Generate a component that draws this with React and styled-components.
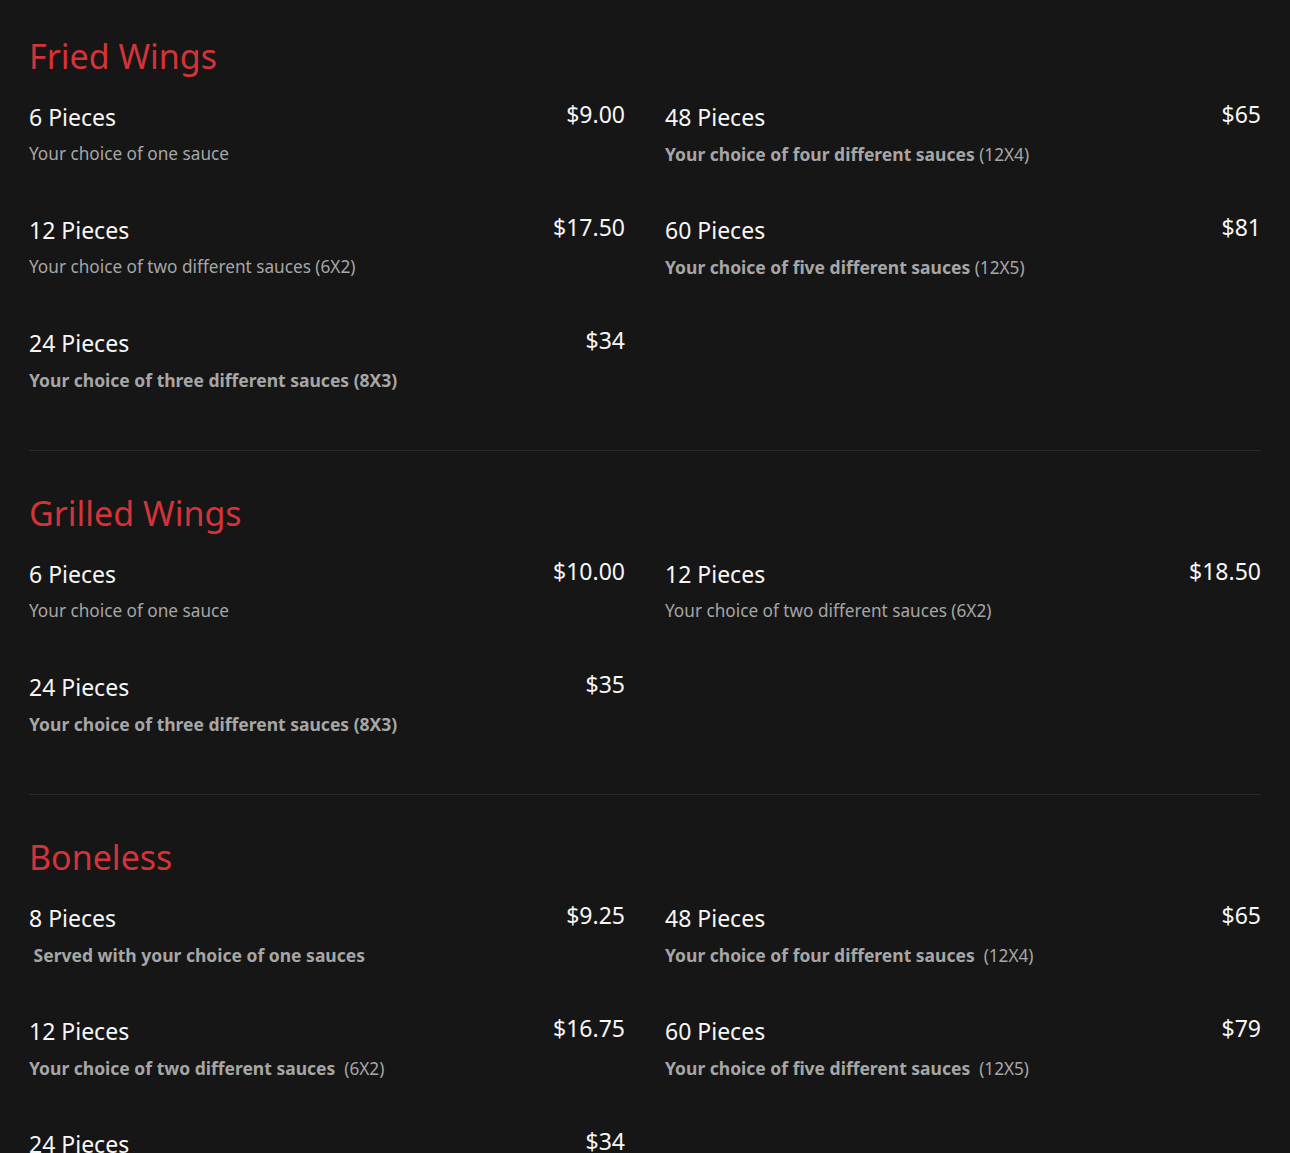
import React from "react";
import styled, { createGlobalStyle } from "styled-components";

const GlobalStyle = createGlobalStyle`
    html, body {
        margin: 0;
        padding: 0;
        background: #161616;
    }
    body {
        font-family: "Noto Sans", "Open Sans", sans-serif;
    }
`;

const menu = [
    {
        title: "Fried Wings",
        left: [
            { name: "6 Pieces", price: "$9.00", desc: [["Your choice of one sauce", false]] },
            { name: "12 Pieces", price: "$17.50", desc: [["Your choice of two different sauces (6X2)", false]] },
            { name: "24 Pieces", price: "$34", desc: [["Your choice of three different sauces (8X3)", true]] },
        ],
        right: [
            { name: "48 Pieces", price: "$65", desc: [["Your choice of four different sauces", true], [" (12X4)", false]] },
            { name: "60 Pieces", price: "$81", desc: [["Your choice of five different sauces", true], [" (12X5)", false]] },
        ],
    },
    {
        title: "Grilled Wings",
        left: [
            { name: "6 Pieces", price: "$10.00", desc: [["Your choice of one sauce", false]] },
            { name: "24 Pieces", price: "$35", desc: [["Your choice of three different sauces (8X3)", true]] },
        ],
        right: [
            { name: "12 Pieces", price: "$18.50", desc: [["Your choice of two different sauces (6X2)", false]] },
        ],
    },
    {
        title: "Boneless",
        left: [
            { name: "8 Pieces", price: "$9.25", desc: [["\u00a0Served with your choice of one sauces", true]] },
            { name: "12 Pieces", price: "$16.75", desc: [["Your choice of two different sauces", true], ["\u00a0 (6X2)", false]] },
            { name: "24 Pieces", price: "$34", desc: [["Your choice of three different sauces (8X3)", true]] },
        ],
        right: [
            { name: "48 Pieces", price: "$65", desc: [["Your choice of four different sauces", true], ["\u00a0 (12X4)", false]] },
            { name: "60 Pieces", price: "$79", desc: [["Your choice of five different sauces", true], ["\u00a0 (12X5)", false]] },
        ],
    },
];

const MenuItem = ({ item }) => (
    <Item>
        <ItemHead>
            <Name>{item.name}</Name>
            <Price>{item.price}</Price>
        </ItemHead>
        <Desc>
            {item.desc.map(([text, bold], i) => (
                <DescPart key={i} $bold={bold}>{text}</DescPart>
            ))}
        </Desc>
    </Item>
);

const App = () => {
    return (
        <Page>
            <GlobalStyle />
            {menu.map((section) => (
                <Section key={section.title}>
                    <Heading>{section.title}</Heading>
                    <Columns>
                        <Column>
                            {section.left.map((item) => <MenuItem item={item} key={item.name} />)}
                        </Column>
                        <Column>
                            {section.right.map((item) => <MenuItem item={item} key={item.name} />)}
                        </Column>
                    </Columns>
                </Section>
            ))}
        </Page>
    );
};

export default App;

const Page = styled.div`
    padding: 0 29px;
    min-height: 100vh;
    box-sizing: border-box;
`;

const Section = styled.section`
    padding: 41px 0 10px;
    border-bottom: 1px solid #2a2a2a;
    &:first-child {
        padding-top: 35px;
    }
`;

const Heading = styled.h2`
    margin: 0 0 23px;
    font-size: 34px;
    line-height: 43px;
    font-weight: 400;
    color: #d3343a;
`;

const Columns = styled.div`
    display: grid;
    grid-template-columns: 1fr 1fr;
    column-gap: 40px;
`;

const Column = styled.div`
    display: flex;
    flex-direction: column;
`;

const Item = styled.div`
    padding-bottom: 47px;
`;

const ItemHead = styled.div`
    display: flex;
    justify-content: space-between;
    align-items: flex-start;
`;

const Name = styled.div`
    font-size: 23px;
    line-height: 32px;
    color: #f7f7f7;
`;

const Price = styled.div`
    font-size: 23px;
    line-height: 26px;
    color: #f7f7f7;
`;

const Desc = styled.div`
    display: flex;
    align-items: baseline;
    height: 26px;
    margin-top: 8px;
    font-size: 17.2px;
    line-height: 26px;
    color: #a6a6a6;
    white-space: pre;
`;

const DescPart = styled.span`
    font-weight: ${(p) => (p.$bold ? 700 : 400)};
    font-size: ${(p) => (p.$bold ? "17.5px" : "inherit")};
`;
